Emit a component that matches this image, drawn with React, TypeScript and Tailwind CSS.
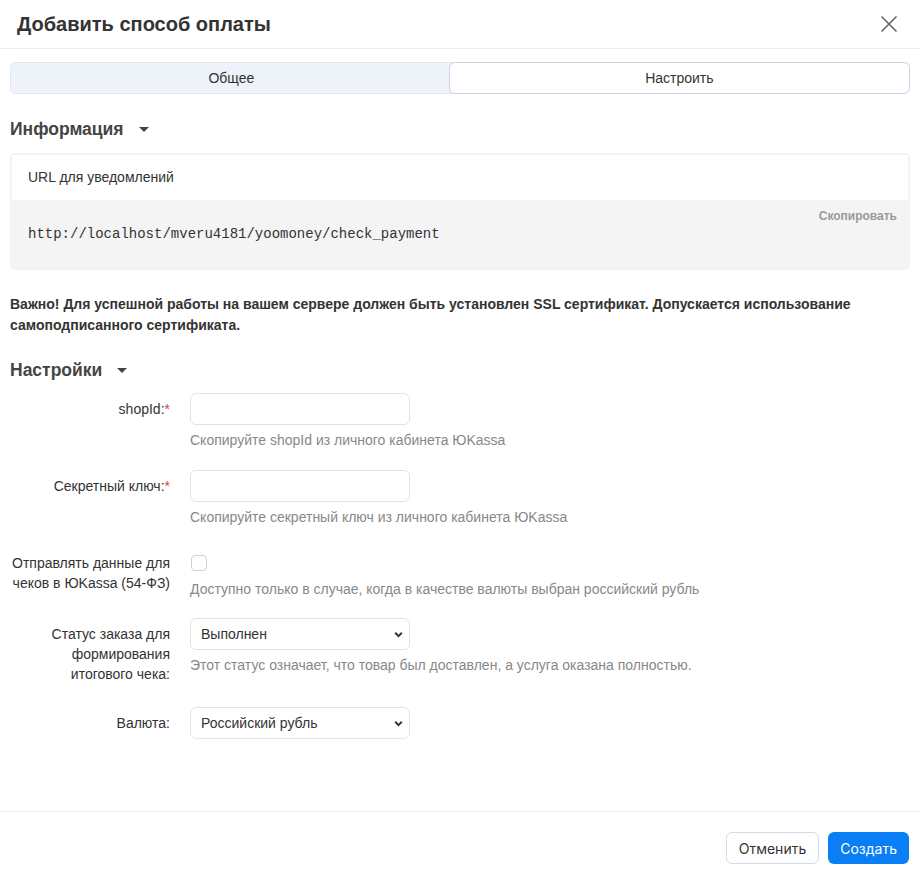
import React from 'react';

const Label: React.FC<{ text: string; required?: boolean }> = ({ text, required }) => (
  <div className="pt-[6px] pb-[4px] text-right text-[14px] leading-5 text-[#333]">
    {text}
    {required && <span className="text-[#e5383b]">*</span>}
  </div>
);

const Help: React.FC<{ children: React.ReactNode }> = ({ children }) => (
  <div className="text-[14px] leading-5 text-[#888]">{children}</div>
);

const Caret = () => (
  <svg width="10" height="6" viewBox="0 0 10 6" className="ml-[15px] mt-0.5">
    <path d="M0 0h10L5 5z" fill="#444" />
  </svg>
);

const Chevron = () => (
  <svg width="9" height="9" viewBox="0 0 9 9" className="pointer-events-none absolute right-[6px] top-[11px]">
    <path d="M1.2 2.8 4.5 6.1l3.3-3.3" fill="none" stroke="#333" strokeWidth="2" />
  </svg>
);

const Select: React.FC<{ value: string }> = ({ value }) => (
  <div className="relative h-8 w-[220px] rounded-md border border-[#dde3ef] bg-white">
    <div className="px-[10px] text-[14px] leading-[30px] text-[#333]">{value}</div>
    <Chevron />
  </div>
);

export default function App() {
  return (
    <div className="flex h-[875px] flex-col bg-white font-['Liberation_Sans',Arial,sans-serif] text-[#333]">
      <div className="flex h-[49px] items-center justify-between border-b border-[#eceef2] pl-[17px] pr-[22px]">
        <h1 className="text-[20px] font-bold text-[#333]">Добавить способ оплаты</h1>
        <svg width="18" height="18" viewBox="0 0 18 18">
          <path d="M1.5 1.5l15 15M16.5 1.5l-15 15" stroke="#666" strokeWidth="1.6" />
        </svg>
      </div>

      <div className="flex-1 px-2.5">
        <div className="mt-[13px] flex h-8 rounded-md border border-[#e2e7f2] bg-[#eef2f9] text-[14px]">
          <div className="flex flex-auto items-center justify-center pl-[2px] text-[#333]">Общее</div>
          <div className="-m-px flex flex-auto items-center justify-center rounded-md border border-[#c9d2e6] bg-white text-[#333]">
            Настроить
          </div>
        </div>

        <div className="mt-[23px] flex items-center">
          <h2 className="text-[17.5px] font-bold leading-6 text-[#444]">Информация</h2>
          <Caret />
        </div>

        <div className="mt-3 rounded-sm border-2 border-[#f3f3f3]">
          <div className="h-[45px] bg-white px-4 pt-[12px] text-[14px] leading-5 text-[#333]">URL для уведомлений</div>
          <div className="h-[68px] bg-[#f4f4f4] pl-4 pr-[11px]">
            <div className="flex justify-end pt-[8px] text-[12px] font-bold leading-4 text-[#999]">Скопировать</div>
            <div className="font-['Liberation_Mono',monospace] text-[14px] leading-5 text-[#333]">
              http://localhost/mveru4181/yoomoney/check_payment
            </div>
          </div>
        </div>

        <p className="mt-[24px] text-[14px] font-bold leading-[21px] text-[#333]">
          Важно! Для успешной работы на вашем сервере должен быть установлен SSL сертификат. Допускается использование
          самоподписанного сертификата.
        </p>

        <div className="mt-[22px] flex items-center">
          <h2 className="text-[17.5px] font-bold leading-6 text-[#444]">Настройки</h2>
          <Caret />
        </div>

        <div className="mt-[11px] grid grid-cols-[160px_1fr] gap-x-5 gap-y-5">
          <Label text="shopId:" required />
          <div>
            <div className="h-8 w-[220px] rounded-md border border-[#dde3ef] bg-white" />
            <div className="mt-[5px]">
              <Help>Скопируйте shopId из личного кабинета ЮKassa</Help>
            </div>
          </div>

          <Label text="Секретный ключ:" required />
          <div>
            <div className="h-8 w-[220px] rounded-md border border-[#dde3ef] bg-white" />
            <div className="mt-[5px]">
              <Help>Скопируйте секретный ключ из личного кабинета ЮKassa</Help>
            </div>
          </div>

          <Label text="Отправлять данные для чеков в ЮKassa (54-ФЗ)" />
          <div>
            <div className="flex h-8 items-center pl-px">
              <div className="h-4 w-4 rounded-[4px] border border-[#c9d2e4] bg-white" />
            </div>
            <Help>Доступно только в случае, когда в качестве валюты выбран российский рубль</Help>
          </div>

          <div className="-mt-px">
            <Label text="Статус заказа для формирования итогового чека:" />
          </div>
          <div className="-mt-px">
            <Select value="Выполнен" />
            <div className="mt-[5px]">
              <Help>Этот статус означает, что товар был доставлен, а услуга оказана полностью.</Help>
            </div>
          </div>

          <div className="-mt-px">
            <Label text="Валюта:" />
          </div>
          <div className="-mt-px">
            <Select value="Российский рубль" />
          </div>
        </div>
      </div>

      <div className="flex justify-end gap-[9px] border-t border-[#eceef2] px-[11px] pt-5 pb-[11px] font-['Inter',sans-serif] text-[14px]">
        <button className="h-8 rounded-md border border-[#d5dbe6] bg-white px-3 text-[#333]">Отменить</button>
        <button className="h-8 rounded-md bg-[#0a7ff5] px-3 text-white">Создать</button>
      </div>
    </div>
  );
}
